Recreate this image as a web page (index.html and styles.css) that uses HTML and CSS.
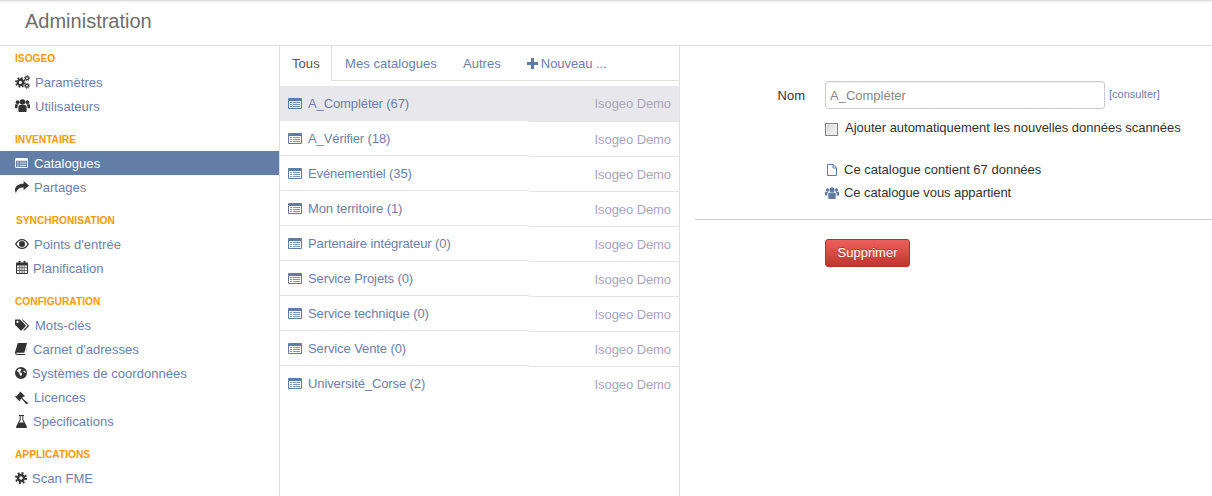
FILE: index.html
```html
<!DOCTYPE html>
<html lang="fr">
<head>
<meta charset="utf-8">
<title>Administration</title>
<link rel="stylesheet" href="styles.css">
</head>
<body>
<svg class="defs" width="0" height="0" aria-hidden="true">
  <symbol id="i-cogs" viewBox="0 0 15 14">
    <g fill="none" stroke="currentColor">
      <circle cx="5.4" cy="7.4" r="2.7" stroke-width="2.2"/>
      <circle cx="5.4" cy="7.4" r="4.5" stroke-width="1.6" stroke-dasharray="1.8 1.73"/>
      <circle cx="12" cy="3.2" r="1.5" stroke-width="1.2"/>
      <circle cx="12" cy="3.2" r="2.5" stroke-width="1" stroke-dasharray="1.1 .86"/>
      <circle cx="12" cy="10.8" r="1.5" stroke-width="1.2"/>
      <circle cx="12" cy="10.8" r="2.5" stroke-width="1" stroke-dasharray="1.1 .86"/>
    </g>
  </symbol>
  <symbol id="i-group" viewBox="0 0 15 13">
    <circle cx="7.5" cy="3" r="2.8" fill="currentColor"/>
    <circle cx="2.6" cy="3.2" r="1.9" fill="currentColor"/>
    <circle cx="12.4" cy="3.2" r="1.9" fill="currentColor"/>
    <path fill="currentColor" d="M3.4 8.3C3.4 6.8 4.3 6 5.4 6h4.2c1.1 0 2 .8 2 2.3V12c0 .6-.4 1-1 1H4.4c-.6 0-1-.4-1-1zM0 5.8c0-.4.3-.6.6-.6h3.1c-.7.6-1.2 1.6-1.2 2.8v1.3H.8C.3 9.3 0 9 0 8.5zM15 5.8c0-.4-.3-.6-.6-.6h-3.1c.7.6 1.2 1.6 1.2 2.8v1.3h2.1c.5 0 .8-.3.8-.8z"/>
  </symbol>
  <symbol id="i-list" viewBox="0 0 14 11">
    <path fill="currentColor" fill-rule="evenodd" d="M1 0h12a1 1 0 0 1 1 1v9a1 1 0 0 1-1 1H1a1 1 0 0 1-1-1V1a1 1 0 0 1 1-1zM1 3v7h12V3z"/>
    <path fill="currentColor" opacity=".8" d="M2 4h2v1H2zM5 4h7v1H5zM2 6h2v1H2zM5 6h7v1H5zM2 8h2v1H2zM5 8h7v1H5z"/>
  </symbol>
  <symbol id="i-share" viewBox="0 0 14 12">
    <path fill="currentColor" d="M8.6 0L14 4.6 8.6 9.2V6.500C4.600 6.400 2.400 7.600 1 12 .2 11 0 9.800 0 8.800 0 5.300 3.400 2.700 8.600 2.700z"/>
  </symbol>
  <symbol id="i-eye" viewBox="0 0 14 10">
    <path fill="currentColor" fill-rule="evenodd" d="M0 5C1.600 2 4 0 7 0s5.400 2 7 5c-1.600 3-4 5-7 5S1.600 8 0 5zm1.500 0C2.800 7.200 4.700 8.700 7 8.700S11.200 7.200 12.500 5C11.200 2.800 9.300 1.300 7 1.300S2.800 2.800 1.500 5z"/>
    <circle cx="7" cy="5" r="3" fill="currentColor"/>
  </symbol>
  <symbol id="i-cal" viewBox="0 0 12 13">
    <path fill="currentColor" fill-rule="evenodd" d="M1 1.500h1.500V0h2v1.500h3V0h2v1.500H11a1 1 0 0 1 1 1V12a1 1 0 0 1-1 1H1a1 1 0 0 1-1-1V2.500a1 1 0 0 1 1-1zM1 4.500V12h10V4.500z"/>
    <path fill="currentColor" opacity=".75" d="M3.300 4.500h1v7.500h-1zM5.500 4.500h1v7.500h-1zM7.700 4.500h1v7.500h-1zM1 6.300h10v1H1zM1 9h10v1H1z"/>
  </symbol>
  <symbol id="i-tags" viewBox="0 0 15 12">
    <path fill="currentColor" fill-rule="evenodd" d="M.6 0h4.600l6 6.100c.4.400.4 1 0 1.400l-4 4c-.4.400-1 .4-1.400 0L0 5.600V.6C0 .2.200 0 .6 0zM2.700 1.500a1.200 1.200 0 1 0 0 2.400 1.200 1.200 0 0 0 0-2.400z"/>
    <path fill="currentColor" d="M7 0h1.300l6.300 6.200c.5.500.5 1 0 1.400l-4 4c-.4.400-.9.400-1.300 0l-.3-.3 4-4c.4-.4.4-.9 0-1.300z"/>
  </symbol>
  <symbol id="i-book" viewBox="0 0 12 12">
    <path fill="currentColor" fill-rule="evenodd" d="M2.800 0H12l-2.300 8.800c-.2.700-.6 1-1.300 1H2c-.6 0-.8.300-.7.600.1.300.4.500.9.500h7.900c.3 0 .5-.200.600-.400L12.300 3l.2 1-2 7c-.2.600-.6 1-1.200 1H2C.8 12 0 11 0 9.800V9z"/>
  </symbol>
  <symbol id="i-globe" viewBox="0 0 12 12">
    <path fill="currentColor" fill-rule="evenodd" d="M6 0a6 6 0 1 1 0 12A6 6 0 0 1 6 0zM3.500 2C3 3 2 3 1.800 4c.6.800 1.400 1 2 1.600.7.500.3 1.300.9 2 .6.400.7 1.400 1.300 1.900.5-.6.200-1.300.9-1.800.5-.5.300-1.100-.1-1.500-.6-.6-1.800-.3-2.300-.9.300-.7 1.200-.5 1.400-1.200C5.300 3 6.400 3.300 6.600 2.400 6.300 1.700 5 1.300 3.500 2zM9 3.500c-.5.300-.9.700-.5 1.300.5.600 1 .3 1.500.8.300.300.500.700.800.800.300-.800 0-2-1.800-2.900z"/>
  </symbol>
  <symbol id="i-gavel" viewBox="0 0 13 13">
    <path fill="currentColor" d="M5.300.4l4.600 4.600-.9.900-.4-.4-1.500 1.500 5.400 4.600c.6.500.4 1.100 0 1.400-.4.300-.9.400-1.400-.1L6.400 7.600 5 9l.4.400-.9.900L0 5.800l.9-.9.400.4L4.800 1.700l-.4-.4z"/>
  </symbol>
  <symbol id="i-flask" viewBox="0 0 11 13">
    <path fill="currentColor" fill-rule="evenodd" d="M3 0h5v1H7.300v3.500l3.500 6.900c.4.800 0 1.600-.9 1.600H1.100C.2 13-.2 12.200.2 11.400l3.500-6.900V1H3zM4.700 1v3.800L3.300 7.600h4.400L6.300 4.800V1z"/>
  </symbol>
  <symbol id="i-cog" viewBox="0 0 12 12">
    <g fill="none" stroke="currentColor">
      <circle cx="6" cy="6" r="3" stroke-width="2.400"/>
      <circle cx="6" cy="6" r="5" stroke-width="2" stroke-dasharray="1.960 1.967"/>
    </g>
  </symbol>
  <symbol id="i-plus" viewBox="0 0 11 11">
    <path fill="currentColor" d="M4 0h3v4h4v3H7v4H4V7H0V4h4z"/>
  </symbol>
  <symbol id="i-file" viewBox="0 0 10 12">
    <path fill="none" stroke="currentColor" d="M.5.500h5.700L9.500 3.800v7.700H.5zM6 .500v3.500h3.500"/>
  </symbol>
</svg>

<header class="topbar"><h1 class="title">Administration</h1></header>

<div class="layout">
  <nav class="side">
    <section class="group">
      <h2 class="group-title">ISOGEO</h2>
      <a class="nav"><svg class="ico w20"><use href="#i-cogs" width="15" height="14"/></svg>Paramètres</a>
      <a class="nav"><svg class="ico w20"><use href="#i-group" width="15" height="13"/></svg>Utilisateurs</a>
    </section>
    <section class="group">
      <h2 class="group-title">INVENTAIRE</h2>
      <a class="nav active"><svg class="ico w19"><use href="#i-list" width="13" height="10" y="2"/></svg>Catalogues</a>
      <a class="nav"><svg class="ico w19"><use href="#i-share" width="14" height="12" y="1"/></svg>Partages</a>
    </section>
    <section class="group">
      <h2 class="group-title shift">SYNCHRONISATION</h2>
      <a class="nav"><svg class="ico w19"><use href="#i-eye" width="14" height="10" y="2"/></svg>Points d'entrée</a>
      <a class="nav"><svg class="ico w18"><use href="#i-cal" width="12" height="13" x="1"/></svg>Planification</a>
    </section>
    <section class="group">
      <h2 class="group-title">CONFIGURATION</h2>
      <a class="nav"><svg class="ico w20"><use href="#i-tags" width="14" height="12" y="1"/></svg>Mots-clés</a>
      <a class="nav"><svg class="ico w18"><use href="#i-book" width="12" height="12" y="1"/></svg>Carnet d'adresses</a>
      <a class="nav"><svg class="ico w17"><use href="#i-globe" width="12" height="12" y="1"/></svg>Systèmes de coordonnées</a>
      <a class="nav"><svg class="ico w19"><use href="#i-gavel" width="13" height="13" y="1"/></svg>Licences</a>
      <a class="nav"><svg class="ico w18"><use href="#i-flask" width="11" height="13" x="1" y="1"/></svg>Spécifications</a>
    </section>
    <section class="group">
      <h2 class="group-title">APPLICATIONS</h2>
      <a class="nav"><svg class="ico w17"><use href="#i-cog" width="12" height="12" y="1"/></svg>Scan FME</a>
    </section>
  </nav>

  <main class="catalogs">
    <div class="tabs">
      <a class="tab current">Tous</a>
      <a class="tab">Mes catalogues</a>
      <a class="tab">Autres</a>
      <a class="tab new"><svg class="plus"><use href="#i-plus"/></svg>Nouveau ...</a>
    </div>
    <ul class="rows">
      <li class="row selected"><span class="name"><svg class="row-ico"><use href="#i-list"/></svg>A_Compléter (67)</span><span class="owner">Isogeo Demo</span></li>
      <li class="row"><span class="name"><svg class="row-ico"><use href="#i-list"/></svg>A_Vérifier (18)</span><span class="owner">Isogeo Demo</span></li>
      <li class="row"><span class="name"><svg class="row-ico"><use href="#i-list"/></svg>Evénementiel (35)</span><span class="owner">Isogeo Demo</span></li>
      <li class="row"><span class="name"><svg class="row-ico"><use href="#i-list"/></svg>Mon territoire (1)</span><span class="owner">Isogeo Demo</span></li>
      <li class="row"><span class="name"><svg class="row-ico"><use href="#i-list"/></svg>Partenaire intégrateur (0)</span><span class="owner">Isogeo Demo</span></li>
      <li class="row"><span class="name"><svg class="row-ico"><use href="#i-list"/></svg>Service Projets (0)</span><span class="owner">Isogeo Demo</span></li>
      <li class="row"><span class="name"><svg class="row-ico"><use href="#i-list"/></svg>Service technique (0)</span><span class="owner">Isogeo Demo</span></li>
      <li class="row"><span class="name"><svg class="row-ico"><use href="#i-list"/></svg>Service Vente (0)</span><span class="owner">Isogeo Demo</span></li>
      <li class="row"><span class="name"><svg class="row-ico"><use href="#i-list"/></svg>Université_Corse (2)</span><span class="owner">Isogeo Demo</span></li>
    </ul>
  </main>

  <aside class="detail">
    <div class="form">
      <label class="form-label" for="nom">Nom</label>
      <div class="form-field">
        <div class="name-line">
          <input class="text-input" id="nom" type="text" placeholder="A_Compléter">
          <a class="consult">[consulter]</a>
        </div>
        <label class="check-line"><input class="check" type="checkbox"><span class="check-text">Ajouter automatiquement les nouvelles données scannées</span></label>
        <p class="info first"><span class="info-ico"><svg class="file"><use href="#i-file"/></svg></span>Ce catalogue contient 67 données</p>
        <p class="info"><span class="info-ico"><svg class="owners"><use href="#i-group"/></svg></span>Ce catalogue vous appartient</p>
      </div>
    </div>
    <hr class="rule">
    <div class="actions"><button class="danger" type="button">Supprimer</button></div>
  </aside>
</div>
</body>
</html>
```
FILE: styles.css
```css
* { box-sizing: border-box; }
html, body { margin: 0; height: 100%; }
body {
  width: 1212px;
  height: 496px;
  overflow: hidden;
  background: #fff;
  color: #333;
  font: 13px/18px "Liberation Sans", Arial, sans-serif;
}
.defs { display: block; height: 0; }
.topbar {
  height: 46px;
  border-bottom: 1px solid #e0e0e0;
  background: linear-gradient(#cfcfcf 0, #ececec 1px, #fff 3px);
  padding: 9px 0 0 25px;
}
.title { margin: 0; font-size: 20px; line-height: 24px; font-weight: 400; color: #6e6e6e; }
.layout { display: flex; height: 450px; }

.side { width: 280px; flex: none; border-right: 1px solid #e0e0e0; }
.group { margin-bottom: 9px; }
.group-title {
  height: 24px;
  margin: 0;
  padding: 2px 0 0 15px;
  font-size: 10.2px;
  line-height: 22px;
  font-weight: 700;
  color: #f90;
}
.group-title.shift { padding-left: 16px; }
.nav {
  display: flex;
  align-items: center;
  height: 24px;
  padding: 2px 0 0 15px;
  color: #6b80ad;
  letter-spacing: .04px;
}
.nav.active { background: #637ea6; color: #fff; }
.ico { flex: none; height: 14px; margin-bottom: 2px; color: #333; }
.nav.active .ico { color: #fff; }
.w17 { width: 17px; }
.w18 { width: 18px; }
.w19 { width: 19px; }
.w20 { width: 20px; }

.catalogs { width: 400px; flex: none; border-right: 1px solid #e0e0e0; }
.tabs {
  display: flex;
  height: 35px;
  border-bottom: 1px solid #e0e0e0;
}
.tab {
  height: 34px;
  line-height: 36px;
  padding: 0 13px;
  color: #6b80ad;
  letter-spacing: .06px;
}
.tab.current {
  width: 52px;
  padding: 0 0 0 12px;
  height: 35px;
  color: #555;
  background: #fff;
  border-right: 1px solid #e0e0e0;
}
.tab.new { padding: 2px 0 0 13px; display: flex; align-items: center; letter-spacing: -.06px; }
.plus { width: 11px; height: 11px; margin: 0 3px 2px 0; color: #5f7ba6; }
.rows { list-style: none; margin: 5px 0 0; padding: 0; }
.row {
  display: flex;
  align-items: flex-start;
  height: 35px;
}
.name, .owner {
  display: flex;
  align-items: center;
  height: 35px;
  border-bottom: 1px solid #e5e5e5;
}
.name { width: 249px; padding: 2px 0 0 8px; color: #6b80ad; letter-spacing: -.1px; }
.owner {
  width: 150px;
  margin-top: 1px;
  justify-content: flex-end;
  padding: 2px 8px 0 0;
  color: #aaa6bd;
  letter-spacing: -.08px;
}
.row:first-child .name { border-bottom-color: transparent; }
.row:last-child .name, .row:last-child .owner { border-bottom-color: transparent; }
.selected { background: #e8e8ec; }
.selected .owner { background: #e8e8ec; padding-top: 0; }
.row-ico { width: 14px; height: 11px; margin: 0 6px 2px 0; flex: none; color: #5f7ba6; }

.detail { flex: 1; padding: 35px 0 0 15px; }
.form { display: flex; }
.form-label {
  width: 130px;
  padding: 6px 20px 0 0;
  text-align: right;
  color: #333;
}
.name-line { display: flex; align-items: flex-start; }
.text-input {
  width: 280px;
  height: 28px;
  padding: 0 4px;
  border: 1px solid #ccc;
  border-radius: 3px;
  font: inherit;
  color: #555;
  box-shadow: inset 0 1px 1px rgba(0,0,0,.06);
}
.text-input::placeholder { color: #888; opacity: 1; }
.consult { margin: 4px 0 0 4px; font-size: 11px; line-height: 18px; color: #6b80ad; }
.check-line { display: flex; align-items: center; height: 18px; margin-top: 11px; color: #333; letter-spacing: -.02px; }
.check {
  appearance: none;
  width: 13px;
  height: 13px;
  margin: 0 7px 0 0;
  border: 1px solid #808080;
  background: linear-gradient(135deg, #d4d4d4, #f6f6f6);
  box-shadow: inset 0 0 0 1px #eee;
}
.check-text { margin-bottom: 2px; }
.info { display: flex; align-items: center; height: 23px; margin: 0; color: #333; letter-spacing: -.07px; }
.info.first { margin-top: 20px; letter-spacing: 0; }
.info-ico { width: 19px; flex: none; display: flex; }
.file { width: 10px; height: 12px; margin-left: 2px; color: #5f7ba6; }
.owners { width: 14px; height: 12px; color: #5f7ba6; }
.rule { margin: 15px 0 19px; border: 0; border-top: 1px solid #ccc; }
.actions { padding-left: 130px; }
.danger {
  width: 85px;
  height: 28px;
  padding: 0;
  border: 1px solid #b5322c;
  border-radius: 3px;
  background: linear-gradient(#ee5f5b, #bd362f);
  color: #fff;
  font: inherit;
  text-shadow: 0 -1px 0 rgba(0,0,0,.25);
}
```
